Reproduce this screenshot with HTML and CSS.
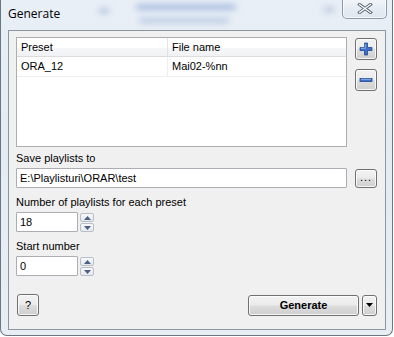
FILE: index.html
```html
<!DOCTYPE html>
<html>
<head>
<meta charset="utf-8">
<link rel="stylesheet" href="styles.css">
</head>
<body>
<div class="window">
  <div class="glass">
    <span class="blur b1"></span><span class="blur b2"></span><span class="blur b3"></span><span class="blur b4"></span>
  </div>
  <div class="titlebar">
    <span class="title">Generate</span>
    <div class="close"><svg width="16" height="11" viewBox="0 0 16 11"><path d="M2.5 1.5 L13.5 9.5 M13.5 1.5 L2.5 9.5" stroke="#5a626d" stroke-width="3.2" stroke-linecap="square"/><path d="M2.5 1.5 L13.5 9.5 M13.5 1.5 L2.5 9.5" stroke="#f4f6f8" stroke-width="1.3" stroke-linecap="square"/></svg></div>
  </div>
  <div class="client">
    <div class="top-row">
      <div class="list">
        <div class="list-head">
          <div class="col c1">Preset</div>
          <div class="col c2">File name</div>
        </div>
        <div class="list-row">
          <div class="col c1">ORA_12</div>
          <div class="col c2">Mai02-%nn</div>
        </div>
      </div>
      <div class="side-btns">
        <div class="btn icon-btn"><svg width="14" height="14" viewBox="0 0 14 14"><path d="M5.5 1h3v4.5H13v3H8.5V13h-3V8.5H1v-3h4.5z" fill="#3f6fc6" stroke="#1f4a94" stroke-width="0.8"/><path d="M6.3 2v4.3H2" stroke="#9fc0f0" stroke-width="0.8" fill="none"/></svg></div>
        <div class="btn icon-btn"><svg width="14" height="14" viewBox="0 0 14 14"><rect x="1" y="5.5" width="12" height="3" fill="#3f6fc6" stroke="#1f4a94" stroke-width="0.8"/><path d="M2 6.3h10" stroke="#9fc0f0" stroke-width="0.8"/></svg></div>
      </div>
    </div>
    <div class="label first">Save playlists to</div>
    <div class="path-row">
      <div class="field path">E:\Playlisturi\ORAR\test</div>
      <div class="btn dots">...</div>
    </div>
    <div class="label">Number of playlists for each preset</div>
    <div class="spin">
      <div class="field num">18</div>
      <div class="arrows">
        <div class="arr"><svg width="7" height="4" viewBox="0 0 7 4"><path d="M0 4L3.5 0L7 4z" fill="#4a5f86"/></svg></div>
        <div class="arr"><svg width="7" height="4" viewBox="0 0 7 4"><path d="M0 0L3.5 4L7 0z" fill="#4a5f86"/></svg></div>
      </div>
    </div>
    <div class="label">Start number</div>
    <div class="spin">
      <div class="field num">0</div>
      <div class="arrows">
        <div class="arr"><svg width="7" height="4" viewBox="0 0 7 4"><path d="M0 4L3.5 0L7 4z" fill="#4a5f86"/></svg></div>
        <div class="arr"><svg width="7" height="4" viewBox="0 0 7 4"><path d="M0 0L3.5 4L7 0z" fill="#4a5f86"/></svg></div>
      </div>
    </div>
    <div class="bottom-row">
      <div class="btn help">?</div>
      <div class="gen-group">
        <div class="btn gen">Generate</div>
        <div class="btn drop"><svg width="7" height="4" viewBox="0 0 7 4"><path d="M0 0L3.5 4L7 0z" fill="#000"/></svg></div>
      </div>
    </div>
  </div>
</div>
</body>
</html>
```
FILE: styles.css
```css
* { box-sizing: border-box; }
html, body { margin: 0; padding: 0; background: #ffffff; }
body { width: 394px; height: 337px; overflow: hidden; font-family: "Liberation Sans", Arial, sans-serif; font-size: 11px; color: #000; }

.window {
  position: relative;
  width: 393px;
  height: 336px;
  border: 1px solid #6b7683;
  border-top: none;
  border-radius: 0 0 7px 7px;
  background: linear-gradient(180deg, #e9eff6 0%, #e4ebf3 40%, #e9eef4 100%);
  overflow: hidden;
}
.glass { position: absolute; inset: 0; overflow: hidden; }
.blur { position: absolute; border-radius: 6px; filter: blur(3px); }
.b1 { left: 135px; top: 4px; width: 100px; height: 6px; background: #a9bde0; }
.b2 { left: 138px; top: 18px; width: 90px; height: 5px; background: #b9c8e4; }
.b3 { left: 98px; top: 8px; width: 10px; height: 6px; background: #b5c6e2; }
.b4 { left: 322px; top: 6px; width: 12px; height: 7px; background: #c4d0e3; }

.titlebar {
  position: relative;
  height: 30px;
  display: flex;
  align-items: flex-start;
}
.title {
  padding: 5px 0 0 7px;
  font-family: "Open Sans", "DejaVu Sans", sans-serif;
  font-size: 12px;
  color: #000;
}
.close {
  position: absolute;
  right: 5px;
  top: -1px;
  width: 45px;
  height: 20px;
  border: 1px solid #8d99a8;
  border-top: none;
  border-radius: 0 0 5px 5px;
  background: linear-gradient(180deg, #f3f6fa 0%, #e6ecf3 50%, #dfe6ef 100%);
  box-shadow: inset 0 0 0 1px rgba(255,255,255,0.7);
  display: flex;
  align-items: center;
  justify-content: center;
}

.client {
  position: relative;
  margin: 0 6px 0 7px;
  height: 300px;
  border: 1px solid #8e96a0;
  background: #f0f0f0;
  padding: 6px 7px 0 7px;
  display: flex;
  flex-direction: column;
}

.top-row { display: flex; gap: 8px; }
.list {
  width: 331px;
  height: 110px;
  border: 1px solid #adadad;
  background: #fff;
}
.list-head {
  display: flex;
  height: 19px;
  background: linear-gradient(180deg, #ffffff 0%, #ffffff 55%, #f6f7f9 56%, #f1f2f4 100%);
  border-bottom: 1px solid #dcdcdc;
}
.list-row { display: flex; height: 20px; border-bottom: 1px solid #efefef; }
.col { padding-left: 4px; line-height: 19px; }
.c1 { width: 151px; border-right: 1px solid #e3e3e3; }
.list-row .c1 { border-right-color: #efefef; }
.c2 { flex: 1; }

.side-btns { display: flex; flex-direction: column; gap: 9px; padding-top: 1px; }
.btn {
  border: 1px solid #707070;
  border-radius: 3px;
  background: linear-gradient(180deg, #f2f2f2 0%, #ebebeb 48%, #dddddd 52%, #cfcfcf 100%);
  box-shadow: inset 0 0 0 1px rgba(255,255,255,0.8);
  display: flex;
  align-items: center;
  justify-content: center;
}
.icon-btn { width: 22px; height: 22px; }

.label { margin-top: 7px; line-height: 14px; height: 14px; }
.label.first { margin-top: 4px; }

.path-row { display: flex; gap: 8px; margin-top: 3px; align-items: center; }
.field {
  background: #fff;
  border: 1px solid #abadb3;
  height: 20px;
  line-height: 18px;
  padding-left: 3px;
  border-radius: 1px;
}
.path { width: 331px; }
.dots { width: 22px; height: 19px; font-size: 11px; line-height: 1; padding-bottom: 2px; letter-spacing: 1px; }

.spin { display: flex; gap: 2px; margin-top: 3px; }
.num { width: 62px; }
.arrows { display: flex; flex-direction: column; gap: 1px; padding-top: 1px; }
.arr {
  width: 14px;
  height: 9px;
  border: 1px solid #b9bec7;
  border-radius: 2px;
  background: linear-gradient(180deg, #f7f8fa 0%, #e5e8ed 100%);
  display: flex;
  align-items: center;
  justify-content: center;
}

.bottom-row { display: flex; justify-content: space-between; align-items: center; margin-top: auto; margin-bottom: 13px; padding-left: 1px; padding-right: 1px; }
.help { width: 22px; height: 22px; }
.gen-group { display: flex; gap: 3px; }
.gen { width: 111px; height: 21px; font-weight: bold; font-size: 11px; }
.drop { width: 15px; height: 21px; }
```
